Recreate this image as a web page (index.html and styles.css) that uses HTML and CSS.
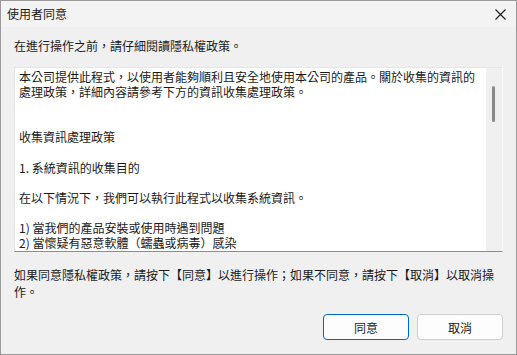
FILE: index.html
```html
<!DOCTYPE html>
<html lang="zh-Hant">
<head>
<meta charset="utf-8">
<link rel="stylesheet" href="styles.css">
</head>
<body>
<div class="window">
  <div class="titlebar">
    <span class="title">使用者同意</span>
    <span class="close"><svg width="11" height="11" viewBox="0 0 11 11"><path d="M0.5 0.5 L10.5 10.5 M10.5 0.5 L0.5 10.5" stroke="#1a1a1a" stroke-width="1.1" fill="none"/></svg></span>
  </div>
  <div class="content">
    <p class="intro">在進行操作之前，請仔細閱讀隱私權政策。</p>
    <div class="box">
      <div class="text">
        <p>本公司提供此程式，以使用者能夠順利且安全地使用本公司的產品。關於收集的資訊的處理政策，詳細內容請參考下方的資訊收集處理政策。</p>
        <p>&nbsp;</p>
        <p>&nbsp;</p>
        <p>收集資訊處理政策</p>
        <p>&nbsp;</p>
        <p>1. 系統資訊的收集目的</p>
        <p>&nbsp;</p>
        <p>在以下情況下，我們可以執行此程式以收集系統資訊。</p>
        <p>&nbsp;</p>
        <p>1) 當我們的產品安裝或使用時遇到問題</p>
        <p>2) 當懷疑有惡意軟體（蠕蟲或病毒）感染</p>
      </div>
      <div class="scroll"><div class="thumb"></div></div>
    </div>
    <p class="note">如果同意隱私權政策，請按下【同意】以進行操作；如果不同意，請按下【取消】以取消操作。</p>
    <div class="buttons">
      <button class="btn primary">同意</button>
      <button class="btn">取消</button>
    </div>
  </div>
</div>
</body>
</html>
```
FILE: styles.css
```css
* { box-sizing: border-box; }
html, body { margin: 0; padding: 0; }
body {
  font-family: "Noto Sans CJK TC", "Noto Sans", sans-serif;
  font-size: 12px;
  color: #1a1a1a;
  background: #f0f0f0;
}
p { margin: 0; }
.window {
  width: 517px;
  height: 355px;
  border: 1px solid #9a9a9a;
  background: #f0f0f0;
  display: flex;
  flex-direction: column;
}
.titlebar {
  height: 26px;
  background: #f3f3f3;
  display: flex;
  align-items: center;
  justify-content: space-between;
  padding: 0 10px 0 6px;
  flex-shrink: 0;
}
.title { line-height: 16px; }
.close { display: flex; }
.content {
  flex: 1;
  padding: 0 13px 0 13px;
  display: flex;
  flex-direction: column;
}
.intro {
  line-height: 16px;
  margin-top: 11px;
}
.box {
  margin-top: 13px;
  height: 185px;
  background: #fff;
  border-top: 1px solid #e6e6e6;
  border-left: 1px solid #e6e6e6;
  border-right: 1px solid #fafafa;
  border-bottom: 1px solid #8c8c8c;
  display: flex;
  overflow: hidden;
}
.text {
  flex: 1;
  padding: 1px 8px 0 4px;
  line-height: 15.1px;
}
.scroll {
  width: 16px;
  background: #f0f0f0;
  flex-shrink: 0;
  position: relative;
}
.thumb {
  position: absolute;
  left: 6px;
  top: 18px;
  width: 3px;
  height: 36px;
  border-radius: 2px;
  background: #8a8a8a;
}
.note {
  margin-top: 14px;
  line-height: 17px;
  padding-right: 4px;
}
.buttons {
  margin-top: auto;
  margin-bottom: 14px;
  display: flex;
  justify-content: flex-end;
  gap: 8px;
}
.btn {
  width: 86px;
  height: 26px;
  font-family: "Noto Sans CJK TC", "Noto Sans", sans-serif;
  font-size: 12px;
  color: #1a1a1a;
  background: #fdfdfd;
  border: 1px solid #d0d0d0;
  border-radius: 4px;
  padding: 0;
}
.btn.primary {
  border: 1px solid #0067c0;
}
```
